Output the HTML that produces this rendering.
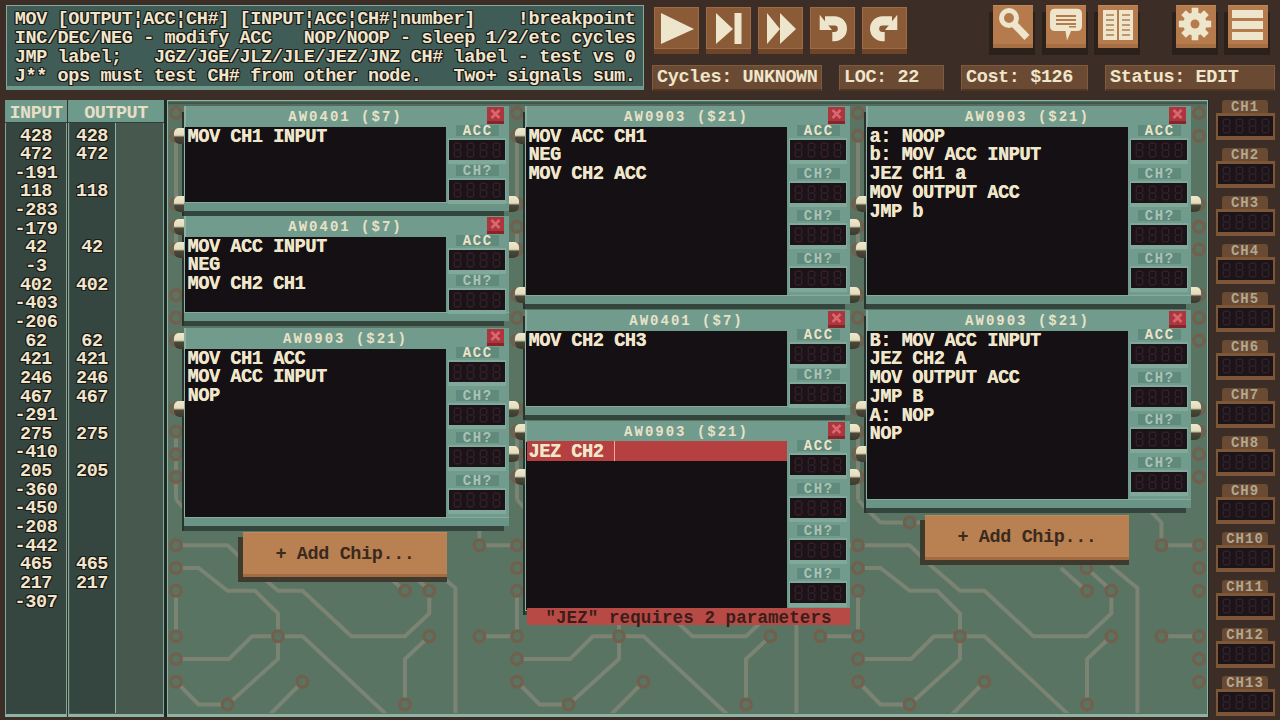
<!DOCTYPE html><html><head><meta charset="utf-8"><style>
*{margin:0;padding:0;box-sizing:border-box}
html,body{width:1280px;height:720px;overflow:hidden;background:#3c2d26}
body{position:relative;font-family:"Liberation Mono", monospace;font-weight:bold;color:#efe6cc}
.a{position:absolute}
.t{position:absolute;white-space:pre;font-size:18.5px;line-height:18.7px;letter-spacing:-0.4px;font-weight:bold}
.ol{text-shadow:1px 0 0 #1d1a17,-1px 0 0 #1d1a17,0 1px 0 #1d1a17,0 -1px 0 #1d1a17,1px 1px 0 #1d1a17,-1px -1px 0 #1d1a17,1px -1px 0 #1d1a17,-1px 1px 0 #1d1a17}
.chip{position:absolute;width:325px;background:#719c8d}
.code{position:absolute;left:1px;top:21px;width:261px;background:#151014}
.title{position:absolute;left:0;top:3px;width:321px;text-align:center;font-size:14px;line-height:17px;letter-spacing:2px;text-indent:2px;color:#e9e1c6}
.cl{position:absolute;width:17px;height:17px;background:#ab363e;border-bottom:3px solid #84262d}
.lab{position:absolute;width:43px;height:11px;background:#5f8a7c;text-align:center;font-size:14px;line-height:12.5px;letter-spacing:1.6px;text-indent:1.6px}
.disp{position:absolute;width:58px;height:26px;background:#80a99a}
.din{position:absolute;left:1.5px;top:2px;width:55.5px;height:20px;background:#1b1317;color:#2e1a1e;font-size:19px;line-height:20px;letter-spacing:0.5px;text-align:center;font-weight:normal}
.ct{font-size:18.5px;line-height:17.43px;letter-spacing:-0.4px;transform:scaleY(1.07);transform-origin:0 0;text-shadow:0.3px 0 0 #efe6cc}
.nub{position:absolute;width:10px;height:16px;background:linear-gradient(#efe8cc 0,#e4dcbc 45%,#4a4838 58%,#3a3a2e 100%)}
.btn{position:absolute;width:45px;height:47px;background:#6e4529}
.bface{position:absolute;left:0;top:0;width:45px;height:42px;background:#8b5a36;border:1.5px solid #9d6b44}
.rbtn{position:absolute;background:#3a2a22}
.sbox{position:absolute;height:26px;background:#6b4a33;border:1.5px solid #7f5b3e;border-bottom:2px solid #4e3524}
.chtab{position:absolute;left:1222px;width:46px;height:13px;background:#6a4a33;color:#b0a790;font-size:14px;border-radius:3px 3px 0 0;line-height:15px;text-align:center;letter-spacing:1px}
.chd{position:absolute;left:1216px;width:59px;height:27px;background:#7c5636}
.chd i{position:absolute;left:2px;top:2.5px;width:55px;height:20.5px;background:#1b1418;color:#2e1d24;font-style:normal;font-size:19px;line-height:21px;text-align:center}
</style></head><body>
<svg width="0" height="0" style="position:absolute"><defs><g id="dg" stroke="#35202a" stroke-width="1.5"><line x1="5.5" y1="3.3" x2="11.5" y2="3.3"/><line x1="5.3" y1="4.0" x2="5.3" y2="9.3"/><line x1="11.7" y1="4.0" x2="11.7" y2="9.3"/><line x1="5.5" y1="10.0" x2="11.5" y2="10.0"/><line x1="5.3" y1="10.7" x2="5.3" y2="16.1"/><line x1="11.7" y1="10.7" x2="11.7" y2="16.1"/><line x1="5.5" y1="16.7" x2="11.5" y2="16.7"/><line x1="18.5" y1="3.3" x2="24.5" y2="3.3"/><line x1="18.3" y1="4.0" x2="18.3" y2="9.3"/><line x1="24.7" y1="4.0" x2="24.7" y2="9.3"/><line x1="18.5" y1="10.0" x2="24.5" y2="10.0"/><line x1="18.3" y1="10.7" x2="18.3" y2="16.1"/><line x1="24.7" y1="10.7" x2="24.7" y2="16.1"/><line x1="18.5" y1="16.7" x2="24.5" y2="16.7"/><line x1="31.5" y1="3.3" x2="37.5" y2="3.3"/><line x1="31.3" y1="4.0" x2="31.3" y2="9.3"/><line x1="37.7" y1="4.0" x2="37.7" y2="9.3"/><line x1="31.5" y1="10.0" x2="37.5" y2="10.0"/><line x1="31.3" y1="10.7" x2="31.3" y2="16.1"/><line x1="37.7" y1="10.7" x2="37.7" y2="16.1"/><line x1="31.5" y1="16.7" x2="37.5" y2="16.7"/><line x1="44.5" y1="3.3" x2="50.5" y2="3.3"/><line x1="44.3" y1="4.0" x2="44.3" y2="9.3"/><line x1="50.7" y1="4.0" x2="50.7" y2="9.3"/><line x1="44.5" y1="10.0" x2="50.5" y2="10.0"/><line x1="44.3" y1="10.7" x2="44.3" y2="16.1"/><line x1="50.7" y1="10.7" x2="50.7" y2="16.1"/><line x1="44.5" y1="16.7" x2="50.5" y2="16.7"/></g></defs></svg>
<div class="a" style="left:6px;top:5px;width:638px;height:85px;background:#3f5c56;border:1.5px solid #82aa9d;border-bottom:4px solid #6f978a"></div>
<div class="t ol" style="left:14.8px;top:11.30px">MOV [OUTPUT¦ACC¦CH#] [INPUT¦ACC¦CH#¦number]    !breakpoint</div>
<div class="t ol" style="left:14.8px;top:30.05px">INC/DEC/NEG - modify ACC   NOP/NOOP - sleep 1/2/etc cycles</div>
<div class="t ol" style="left:14.8px;top:48.80px">JMP label;   JGZ/JGE/JLZ/JLE/JEZ/JNZ CH# label - test vs 0</div>
<div class="t ol" style="left:14.8px;top:67.55px">J** ops must test CH# from other node.   Two+ signals sum.</div>
<div class="btn" style="left:654px;top:6.5px"><div class="bface"></div><svg class="a" style="left:0;top:0" width="45" height="47"><polygon points="7,6 7,37 40,22" fill="#ede5cc"/></svg></div>
<div class="btn" style="left:706px;top:6.5px"><div class="bface"></div><svg class="a" style="left:0;top:0" width="45" height="47"><polygon points="10,6 10,37 27,22" fill="#ede5cc"/><rect x="28.5" y="6" width="7" height="31" fill="#ede5cc"/></svg></div>
<div class="btn" style="left:758px;top:6.5px"><div class="bface"></div><svg class="a" style="left:0;top:0" width="45" height="47"><polygon points="9,6 9,37 22,22" fill="#ede5cc"/><polygon points="22,6 22,37 38,22" fill="#ede5cc"/></svg></div>
<div class="btn" style="left:810px;top:6.5px"><div class="bface"></div><svg class="a" style="left:0;top:0" width="45" height="47"><path d="M15,13.8 H24.5 A7.9,7.9 0 0 1 24.5,29.6 H22.3" fill="none" stroke="#ede5cc" stroke-width="9.2"/><polygon points="9.7,7.8 9.7,23 22,23" fill="#ede5cc"/></svg></div>
<div class="btn" style="left:862px;top:6.5px"><div class="bface"></div><svg class="a" style="left:0;top:0" width="45" height="47"><g transform="translate(45,0) scale(-1,1)"><path d="M15,13.8 H24.5 A7.9,7.9 0 0 1 24.5,29.6 H22.3" fill="none" stroke="#ede5cc" stroke-width="9.2"/><polygon points="9.7,7.8 9.7,23 22,23" fill="#ede5cc"/></g></svg></div>
<div class="a" style="left:989px;top:12px;width:46px;height:42.5px;background:#2b201a"></div>
<div class="a" style="left:993px;top:5px;width:40px;height:43px;background:#a66f44"></div>
<div class="a" style="left:993px;top:5px;width:40px;height:39px;background:#b67b4d;border-top:1.5px solid #c08856"></div>
<svg class="a" style="left:993px;top:5px" width="40" height="40"><circle cx="16" cy="13" r="7.5" fill="none" stroke="#ede5cc" stroke-width="5"/><line x1="21" y1="19" x2="34" y2="32.5" stroke="#ede5cc" stroke-width="7"/></svg>
<div class="a" style="left:1042px;top:12px;width:46px;height:42.5px;background:#2b201a"></div>
<div class="a" style="left:1046px;top:5px;width:40px;height:43px;background:#a66f44"></div>
<div class="a" style="left:1046px;top:5px;width:40px;height:39px;background:#b67b4d;border-top:1.5px solid #c08856"></div>
<svg class="a" style="left:1046px;top:5px" width="40" height="40"><path d="M9,3.8 L31,3.8 Q36,3.8 36,9 L36,21 Q36,26 31,26 L25,26 L21,35.5 L19.5,26 L9,26 Q4,26 4,21 L4,9 Q4,3.8 9,3.8 Z" fill="#ede5cc"/><rect x="10" y="10" width="20" height="2" fill="#b67b4d"/><rect x="10" y="14" width="20" height="2" fill="#b67b4d"/><rect x="10" y="18" width="20" height="2" fill="#b67b4d"/><rect x="23" y="21" width="7" height="1.5" fill="#b67b4d"/></svg>
<div class="a" style="left:1094px;top:12px;width:46px;height:42.5px;background:#2b201a"></div>
<div class="a" style="left:1098px;top:5px;width:40px;height:43px;background:#a66f44"></div>
<div class="a" style="left:1098px;top:5px;width:40px;height:39px;background:#b67b4d;border-top:1.5px solid #c08856"></div>
<svg class="a" style="left:1098px;top:5px" width="40" height="40"><path d="M5,5 L19,5 L19,35 L5,35 Z M21,5 L35,5 L35,35 L21,35 Z" fill="#ede5cc"/><g stroke="#b67b4d" stroke-width="1.5"><line x1="8" y1="10" x2="16" y2="10"/><line x1="8" y1="15" x2="16" y2="15"/><line x1="8" y1="20" x2="16" y2="20"/><line x1="8" y1="25" x2="16" y2="25"/><line x1="8" y1="30" x2="16" y2="30"/><line x1="24" y1="10" x2="32" y2="10"/><line x1="24" y1="15" x2="32" y2="15"/><line x1="24" y1="20" x2="32" y2="20"/><line x1="24" y1="25" x2="32" y2="25"/><line x1="24" y1="30" x2="32" y2="30"/></g></svg>
<div class="a" style="left:1172px;top:12px;width:46px;height:42.5px;background:#2b201a"></div>
<div class="a" style="left:1176px;top:5px;width:40px;height:43px;background:#a66f44"></div>
<div class="a" style="left:1176px;top:5px;width:40px;height:39px;background:#b67b4d;border-top:1.5px solid #c08856"></div>
<svg class="a" style="left:1176px;top:5px" width="40" height="40"><polygon points="29.99,15.60 35.17,15.72 35.17,22.28 29.99,22.40 29.17,24.37 32.75,28.12 28.12,32.75 24.37,29.17 22.40,29.99 22.28,35.17 15.72,35.17 15.60,29.99 13.63,29.17 9.88,32.75 5.25,28.12 8.83,24.37 8.01,22.40 2.83,22.28 2.83,15.72 8.01,15.60 8.83,13.63 5.25,9.88 9.88,5.25 13.63,8.83 15.60,8.01 15.72,2.83 22.28,2.83 22.40,8.01 24.37,8.83 28.12,5.25 32.75,9.88 29.17,13.63" fill="#ede5cc"/><circle cx="19" cy="19" r="11.5" fill="#ede5cc"/><circle cx="19" cy="19" r="4.5" fill="#b67b4d"/></svg>
<div class="a" style="left:1224px;top:12px;width:46px;height:42.5px;background:#2b201a"></div>
<div class="a" style="left:1228px;top:5px;width:40px;height:43px;background:#a66f44"></div>
<div class="a" style="left:1228px;top:5px;width:40px;height:39px;background:#b67b4d;border-top:1.5px solid #c08856"></div>
<svg class="a" style="left:1228px;top:5px" width="40" height="40"><rect x="4" y="5" width="31" height="8" fill="#ede5cc"/><rect x="4" y="16" width="31" height="8" fill="#ede5cc"/><rect x="4" y="27" width="31" height="8" fill="#ede5cc"/></svg>
<div class="sbox" style="left:652px;top:64.5px;width:170px"></div>
<div class="t" style="left:657px;top:69px">Cycles: UNKNOWN</div>
<div class="sbox" style="left:839px;top:64.5px;width:105px"></div>
<div class="t" style="left:844px;top:69px">LOC: 22</div>
<div class="sbox" style="left:961px;top:64.5px;width:127px"></div>
<div class="t" style="left:966px;top:69px">Cost: $126</div>
<div class="sbox" style="left:1105px;top:64.5px;width:170px"></div>
<div class="t" style="left:1110px;top:69px">Status: EDIT</div>
<div class="a" style="left:5px;top:100px;width:62px;height:617px;background:#34463f;border:1.5px solid #7fa79a;border-bottom:3.5px solid #8fb3a5"></div>
<div class="a" style="left:68px;top:100px;width:96px;height:617px;background:#47594f;border:1.5px solid #7fa79a;border-bottom:3.5px solid #8fb3a5"></div>
<div class="a" style="left:69.5px;top:123px;width:46px;height:590px;background:#34463f;border-right:1.5px solid #8fb3a5"></div>
<div class="a" style="left:5px;top:100px;width:62px;height:23px;background:#6e9a8c;border-bottom:1px solid #2c3f3b"></div>
<div class="a" style="left:68px;top:100px;width:96px;height:23px;background:#6e9a8c;border-bottom:1px solid #2c3f3b"></div>
<div class="t" style="left:5px;top:105px;width:62px;text-align:center;color:#e7dec3;letter-spacing:-0.5px">INPUT</div>
<div class="t" style="left:68px;top:105px;width:96px;text-align:center;color:#e7dec3;letter-spacing:-0.5px">OUTPUT</div>
<div class="t ol" style="left:6px;top:127.5px;width:60px;text-align:center">428</div>
<div class="t ol" style="left:69px;top:127.5px;width:46px;text-align:center">428</div>
<div class="t ol" style="left:6px;top:146.1px;width:60px;text-align:center">472</div>
<div class="t ol" style="left:69px;top:146.1px;width:46px;text-align:center">472</div>
<div class="t ol" style="left:6px;top:164.8px;width:60px;text-align:center">-191</div>
<div class="t ol" style="left:6px;top:183.4px;width:60px;text-align:center">118</div>
<div class="t ol" style="left:69px;top:183.4px;width:46px;text-align:center">118</div>
<div class="t ol" style="left:6px;top:202.1px;width:60px;text-align:center">-283</div>
<div class="t ol" style="left:6px;top:220.7px;width:60px;text-align:center">-179</div>
<div class="t ol" style="left:6px;top:239.3px;width:60px;text-align:center">42</div>
<div class="t ol" style="left:69px;top:239.3px;width:46px;text-align:center">42</div>
<div class="t ol" style="left:6px;top:258.0px;width:60px;text-align:center">-3</div>
<div class="t ol" style="left:6px;top:276.6px;width:60px;text-align:center">402</div>
<div class="t ol" style="left:69px;top:276.6px;width:46px;text-align:center">402</div>
<div class="t ol" style="left:6px;top:295.3px;width:60px;text-align:center">-403</div>
<div class="t ol" style="left:6px;top:313.9px;width:60px;text-align:center">-206</div>
<div class="t ol" style="left:6px;top:332.5px;width:60px;text-align:center">62</div>
<div class="t ol" style="left:69px;top:332.5px;width:46px;text-align:center">62</div>
<div class="t ol" style="left:6px;top:351.2px;width:60px;text-align:center">421</div>
<div class="t ol" style="left:69px;top:351.2px;width:46px;text-align:center">421</div>
<div class="t ol" style="left:6px;top:369.8px;width:60px;text-align:center">246</div>
<div class="t ol" style="left:69px;top:369.8px;width:46px;text-align:center">246</div>
<div class="t ol" style="left:6px;top:388.5px;width:60px;text-align:center">467</div>
<div class="t ol" style="left:69px;top:388.5px;width:46px;text-align:center">467</div>
<div class="t ol" style="left:6px;top:407.1px;width:60px;text-align:center">-291</div>
<div class="t ol" style="left:6px;top:425.7px;width:60px;text-align:center">275</div>
<div class="t ol" style="left:69px;top:425.7px;width:46px;text-align:center">275</div>
<div class="t ol" style="left:6px;top:444.4px;width:60px;text-align:center">-410</div>
<div class="t ol" style="left:6px;top:463.0px;width:60px;text-align:center">205</div>
<div class="t ol" style="left:69px;top:463.0px;width:46px;text-align:center">205</div>
<div class="t ol" style="left:6px;top:481.7px;width:60px;text-align:center">-360</div>
<div class="t ol" style="left:6px;top:500.3px;width:60px;text-align:center">-450</div>
<div class="t ol" style="left:6px;top:518.9px;width:60px;text-align:center">-208</div>
<div class="t ol" style="left:6px;top:537.6px;width:60px;text-align:center">-442</div>
<div class="t ol" style="left:6px;top:556.2px;width:60px;text-align:center">465</div>
<div class="t ol" style="left:69px;top:556.2px;width:46px;text-align:center">465</div>
<div class="t ol" style="left:6px;top:574.9px;width:60px;text-align:center">217</div>
<div class="t ol" style="left:69px;top:574.9px;width:46px;text-align:center">217</div>
<div class="t ol" style="left:6px;top:593.5px;width:60px;text-align:center">-307</div>
<div class="a" style="left:164px;top:100px;width:1045px;height:617px;background:#1f2a25"></div>
<div class="a" style="left:166.5px;top:100px;width:1041.5px;height:617px;background:#5a7463;border:1.5px solid #8db3a4;border-bottom:3.5px solid #8db3a4"></div>
<div class="a" style="left:168px;top:101.5px;width:1039px;height:2px;background:#3f5a4c"></div><div class="a" style="left:168px;top:103.5px;width:1039px;height:2.5px;background:#566a5e"></div>
<svg class="a" style="left:168px;top:101px" width="1039" height="612" viewBox="168 101 1039 612"><polyline points="176.0,545.25 227.6,545.25 249.0,565.70 278.0,590.75 302.5,590.75 351.4,636.25 405.0,636.25 429.3,613.50 429.3,590.75" fill="none" stroke="#7b8373" stroke-width="4" stroke-linejoin="round"/><polyline points="176.0,568.00 198.6,568.00 227.6,590.75 255.0,590.75 278.0,613.50 278.0,636.25" fill="none" stroke="#7b8373" stroke-width="4" stroke-linejoin="round"/><polyline points="176.0,590.75 176.0,636.25" fill="none" stroke="#7b8373" stroke-width="4" stroke-linejoin="round"/><polyline points="176.0,659.00 229.0,659.00 252.0,636.25 278.0,636.25" fill="none" stroke="#7b8373" stroke-width="4" stroke-linejoin="round"/><polyline points="278.0,636.25 302.5,636.25 388.0,716.00" fill="none" stroke="#7b8373" stroke-width="4" stroke-linejoin="round"/><polyline points="278.0,636.25 278.0,659.00 227.6,704.50" fill="none" stroke="#7b8373" stroke-width="4" stroke-linejoin="round"/><polyline points="176.0,681.75 198.6,704.50 227.6,704.50" fill="none" stroke="#7b8373" stroke-width="4" stroke-linejoin="round"/><polyline points="302.5,681.75 268.5,716.00" fill="none" stroke="#7b8373" stroke-width="4" stroke-linejoin="round"/><polyline points="429.3,636.25 405.0,659.00 405.0,704.50" fill="none" stroke="#7b8373" stroke-width="4" stroke-linejoin="round"/><polyline points="378.8,568.00 404.3,590.75" fill="none" stroke="#7b8373" stroke-width="4" stroke-linejoin="round"/><polyline points="404.3,568.00 429.9,590.75" fill="none" stroke="#7b8373" stroke-width="4" stroke-linejoin="round"/><polyline points="428.3,565.70 455.4,588.00 455.4,716.00" fill="none" stroke="#7b8373" stroke-width="4" stroke-linejoin="round"/><polyline points="479.4,545.25 479.4,522.50 460.0,502.00" fill="none" stroke="#7b8373" stroke-width="4" stroke-linejoin="round"/><polyline points="479.4,545.25 517.0,545.25" fill="none" stroke="#7b8373" stroke-width="4" stroke-linejoin="round"/><polyline points="479.4,636.25 517.0,636.25" fill="none" stroke="#7b8373" stroke-width="4" stroke-linejoin="round"/><polyline points="176.0,474.00 176.0,499.75" fill="none" stroke="#7b8373" stroke-width="4" stroke-linejoin="round"/><polyline points="176.0,499.75 186.0,510.50 198.6,522.50 245.0,522.50" fill="none" stroke="#7b8373" stroke-width="4" stroke-linejoin="round"/><polyline points="176.0,135.75 176.0,204.00" fill="none" stroke="#7b8373" stroke-width="4" stroke-linejoin="round"/><polyline points="176.0,226.75 176.0,247.00" fill="none" stroke="#7b8373" stroke-width="4" stroke-linejoin="round"/><polyline points="176.0,431.50 176.0,474.00" fill="none" stroke="#7b8373" stroke-width="4" stroke-linejoin="round"/><polyline points="517.0,545.25 568.6,545.25 590.0,565.70 619.0,590.75 643.5,590.75 692.4,636.25 746.0,636.25 770.3,613.50 770.3,590.75" fill="none" stroke="#7b8373" stroke-width="4" stroke-linejoin="round"/><polyline points="517.0,568.00 539.6,568.00 568.6,590.75 596.0,590.75 619.0,613.50 619.0,636.25" fill="none" stroke="#7b8373" stroke-width="4" stroke-linejoin="round"/><polyline points="517.0,590.75 517.0,636.25" fill="none" stroke="#7b8373" stroke-width="4" stroke-linejoin="round"/><polyline points="517.0,659.00 570.0,659.00 593.0,636.25 619.0,636.25" fill="none" stroke="#7b8373" stroke-width="4" stroke-linejoin="round"/><polyline points="619.0,636.25 643.5,636.25 729.0,716.00" fill="none" stroke="#7b8373" stroke-width="4" stroke-linejoin="round"/><polyline points="619.0,636.25 619.0,659.00 568.6,704.50" fill="none" stroke="#7b8373" stroke-width="4" stroke-linejoin="round"/><polyline points="517.0,681.75 539.6,704.50 568.6,704.50" fill="none" stroke="#7b8373" stroke-width="4" stroke-linejoin="round"/><polyline points="643.5,681.75 609.5,716.00" fill="none" stroke="#7b8373" stroke-width="4" stroke-linejoin="round"/><polyline points="770.3,636.25 746.0,659.00 746.0,704.50" fill="none" stroke="#7b8373" stroke-width="4" stroke-linejoin="round"/><polyline points="719.8,568.00 745.3,590.75" fill="none" stroke="#7b8373" stroke-width="4" stroke-linejoin="round"/><polyline points="745.3,568.00 770.9,590.75" fill="none" stroke="#7b8373" stroke-width="4" stroke-linejoin="round"/><polyline points="769.3,565.70 796.4,588.00 796.4,716.00" fill="none" stroke="#7b8373" stroke-width="4" stroke-linejoin="round"/><polyline points="820.4,545.25 820.4,522.50 801.0,502.00" fill="none" stroke="#7b8373" stroke-width="4" stroke-linejoin="round"/><polyline points="820.4,545.25 858.0,545.25" fill="none" stroke="#7b8373" stroke-width="4" stroke-linejoin="round"/><polyline points="820.4,636.25 858.0,636.25" fill="none" stroke="#7b8373" stroke-width="4" stroke-linejoin="round"/><polyline points="517.0,474.00 517.0,499.75" fill="none" stroke="#7b8373" stroke-width="4" stroke-linejoin="round"/><polyline points="517.0,499.75 527.0,510.50 539.6,522.50 586.0,522.50" fill="none" stroke="#7b8373" stroke-width="4" stroke-linejoin="round"/><polyline points="517.0,135.75 517.0,204.00" fill="none" stroke="#7b8373" stroke-width="4" stroke-linejoin="round"/><polyline points="517.0,226.75 517.0,247.00" fill="none" stroke="#7b8373" stroke-width="4" stroke-linejoin="round"/><polyline points="517.0,431.50 517.0,474.00" fill="none" stroke="#7b8373" stroke-width="4" stroke-linejoin="round"/><polyline points="858.0,545.25 909.6,545.25 931.0,565.70 960.0,590.75 984.5,590.75 1033.4,636.25 1087.0,636.25 1111.3,613.50 1111.3,590.75" fill="none" stroke="#7b8373" stroke-width="4" stroke-linejoin="round"/><polyline points="858.0,568.00 880.6,568.00 909.6,590.75 937.0,590.75 960.0,613.50 960.0,636.25" fill="none" stroke="#7b8373" stroke-width="4" stroke-linejoin="round"/><polyline points="858.0,590.75 858.0,636.25" fill="none" stroke="#7b8373" stroke-width="4" stroke-linejoin="round"/><polyline points="858.0,659.00 911.0,659.00 934.0,636.25 960.0,636.25" fill="none" stroke="#7b8373" stroke-width="4" stroke-linejoin="round"/><polyline points="960.0,636.25 984.5,636.25 1070.0,716.00" fill="none" stroke="#7b8373" stroke-width="4" stroke-linejoin="round"/><polyline points="960.0,636.25 960.0,659.00 909.6,704.50" fill="none" stroke="#7b8373" stroke-width="4" stroke-linejoin="round"/><polyline points="858.0,681.75 880.6,704.50 909.6,704.50" fill="none" stroke="#7b8373" stroke-width="4" stroke-linejoin="round"/><polyline points="984.5,681.75 950.5,716.00" fill="none" stroke="#7b8373" stroke-width="4" stroke-linejoin="round"/><polyline points="1111.3,636.25 1087.0,659.00 1087.0,704.50" fill="none" stroke="#7b8373" stroke-width="4" stroke-linejoin="round"/><polyline points="1060.8,568.00 1086.3,590.75" fill="none" stroke="#7b8373" stroke-width="4" stroke-linejoin="round"/><polyline points="1086.3,568.00 1111.9,590.75" fill="none" stroke="#7b8373" stroke-width="4" stroke-linejoin="round"/><polyline points="1110.3,565.70 1137.4,588.00 1137.4,716.00" fill="none" stroke="#7b8373" stroke-width="4" stroke-linejoin="round"/><polyline points="1161.4,545.25 1161.4,522.50 1142.0,502.00" fill="none" stroke="#7b8373" stroke-width="4" stroke-linejoin="round"/><polyline points="1161.4,545.25 1199.0,545.25" fill="none" stroke="#7b8373" stroke-width="4" stroke-linejoin="round"/><polyline points="1161.4,636.25 1199.0,636.25" fill="none" stroke="#7b8373" stroke-width="4" stroke-linejoin="round"/><polyline points="858.0,474.00 858.0,499.75" fill="none" stroke="#7b8373" stroke-width="4" stroke-linejoin="round"/><polyline points="858.0,499.75 868.0,510.50 880.6,522.50 927.0,522.50" fill="none" stroke="#7b8373" stroke-width="4" stroke-linejoin="round"/><polyline points="858.0,135.75 858.0,204.00" fill="none" stroke="#7b8373" stroke-width="4" stroke-linejoin="round"/><polyline points="858.0,226.75 858.0,247.00" fill="none" stroke="#7b8373" stroke-width="4" stroke-linejoin="round"/><polyline points="858.0,431.50 858.0,474.00" fill="none" stroke="#7b8373" stroke-width="4" stroke-linejoin="round"/><circle cx="176" cy="113.00" r="5.3" fill="#5a7463" stroke="#725f4c" stroke-width="3.2"/><circle cx="176" cy="135.75" r="5.3" fill="#5a7463" stroke="#725f4c" stroke-width="3.2"/><circle cx="176" cy="204.00" r="5.3" fill="#5a7463" stroke="#725f4c" stroke-width="3.2"/><circle cx="176" cy="226.75" r="5.3" fill="#5a7463" stroke="#725f4c" stroke-width="3.2"/><circle cx="176" cy="249.50" r="5.3" fill="#5a7463" stroke="#725f4c" stroke-width="3.2"/><circle cx="176" cy="295.00" r="5.3" fill="#5a7463" stroke="#725f4c" stroke-width="3.2"/><circle cx="176" cy="317.75" r="5.3" fill="#5a7463" stroke="#725f4c" stroke-width="3.2"/><circle cx="176" cy="340.50" r="5.3" fill="#5a7463" stroke="#725f4c" stroke-width="3.2"/><circle cx="176" cy="408.75" r="5.3" fill="#5a7463" stroke="#725f4c" stroke-width="3.2"/><circle cx="176" cy="431.50" r="5.3" fill="#5a7463" stroke="#725f4c" stroke-width="3.2"/><circle cx="176" cy="454.25" r="5.3" fill="#5a7463" stroke="#725f4c" stroke-width="3.2"/><circle cx="176" cy="477.00" r="5.3" fill="#5a7463" stroke="#725f4c" stroke-width="3.2"/><circle cx="176" cy="545.25" r="5.3" fill="#5a7463" stroke="#725f4c" stroke-width="3.2"/><circle cx="176" cy="568.00" r="5.3" fill="#5a7463" stroke="#725f4c" stroke-width="3.2"/><circle cx="176" cy="590.75" r="5.3" fill="#5a7463" stroke="#725f4c" stroke-width="3.2"/><circle cx="176" cy="636.25" r="5.3" fill="#5a7463" stroke="#725f4c" stroke-width="3.2"/><circle cx="176" cy="659.00" r="5.3" fill="#5a7463" stroke="#725f4c" stroke-width="3.2"/><circle cx="176" cy="681.75" r="5.3" fill="#5a7463" stroke="#725f4c" stroke-width="3.2"/><circle cx="517" cy="113.00" r="5.3" fill="#5a7463" stroke="#725f4c" stroke-width="3.2"/><circle cx="517" cy="135.75" r="5.3" fill="#5a7463" stroke="#725f4c" stroke-width="3.2"/><circle cx="517" cy="204.00" r="5.3" fill="#5a7463" stroke="#725f4c" stroke-width="3.2"/><circle cx="517" cy="226.75" r="5.3" fill="#5a7463" stroke="#725f4c" stroke-width="3.2"/><circle cx="517" cy="249.50" r="5.3" fill="#5a7463" stroke="#725f4c" stroke-width="3.2"/><circle cx="517" cy="295.00" r="5.3" fill="#5a7463" stroke="#725f4c" stroke-width="3.2"/><circle cx="517" cy="317.75" r="5.3" fill="#5a7463" stroke="#725f4c" stroke-width="3.2"/><circle cx="517" cy="340.50" r="5.3" fill="#5a7463" stroke="#725f4c" stroke-width="3.2"/><circle cx="517" cy="408.75" r="5.3" fill="#5a7463" stroke="#725f4c" stroke-width="3.2"/><circle cx="517" cy="431.50" r="5.3" fill="#5a7463" stroke="#725f4c" stroke-width="3.2"/><circle cx="517" cy="454.25" r="5.3" fill="#5a7463" stroke="#725f4c" stroke-width="3.2"/><circle cx="517" cy="477.00" r="5.3" fill="#5a7463" stroke="#725f4c" stroke-width="3.2"/><circle cx="517" cy="545.25" r="5.3" fill="#5a7463" stroke="#725f4c" stroke-width="3.2"/><circle cx="517" cy="568.00" r="5.3" fill="#5a7463" stroke="#725f4c" stroke-width="3.2"/><circle cx="517" cy="590.75" r="5.3" fill="#5a7463" stroke="#725f4c" stroke-width="3.2"/><circle cx="517" cy="636.25" r="5.3" fill="#5a7463" stroke="#725f4c" stroke-width="3.2"/><circle cx="517" cy="659.00" r="5.3" fill="#5a7463" stroke="#725f4c" stroke-width="3.2"/><circle cx="517" cy="681.75" r="5.3" fill="#5a7463" stroke="#725f4c" stroke-width="3.2"/><circle cx="858" cy="113.00" r="5.3" fill="#5a7463" stroke="#725f4c" stroke-width="3.2"/><circle cx="858" cy="135.75" r="5.3" fill="#5a7463" stroke="#725f4c" stroke-width="3.2"/><circle cx="858" cy="204.00" r="5.3" fill="#5a7463" stroke="#725f4c" stroke-width="3.2"/><circle cx="858" cy="226.75" r="5.3" fill="#5a7463" stroke="#725f4c" stroke-width="3.2"/><circle cx="858" cy="249.50" r="5.3" fill="#5a7463" stroke="#725f4c" stroke-width="3.2"/><circle cx="858" cy="295.00" r="5.3" fill="#5a7463" stroke="#725f4c" stroke-width="3.2"/><circle cx="858" cy="317.75" r="5.3" fill="#5a7463" stroke="#725f4c" stroke-width="3.2"/><circle cx="858" cy="340.50" r="5.3" fill="#5a7463" stroke="#725f4c" stroke-width="3.2"/><circle cx="858" cy="408.75" r="5.3" fill="#5a7463" stroke="#725f4c" stroke-width="3.2"/><circle cx="858" cy="431.50" r="5.3" fill="#5a7463" stroke="#725f4c" stroke-width="3.2"/><circle cx="858" cy="454.25" r="5.3" fill="#5a7463" stroke="#725f4c" stroke-width="3.2"/><circle cx="858" cy="477.00" r="5.3" fill="#5a7463" stroke="#725f4c" stroke-width="3.2"/><circle cx="858" cy="545.25" r="5.3" fill="#5a7463" stroke="#725f4c" stroke-width="3.2"/><circle cx="858" cy="568.00" r="5.3" fill="#5a7463" stroke="#725f4c" stroke-width="3.2"/><circle cx="858" cy="590.75" r="5.3" fill="#5a7463" stroke="#725f4c" stroke-width="3.2"/><circle cx="858" cy="636.25" r="5.3" fill="#5a7463" stroke="#725f4c" stroke-width="3.2"/><circle cx="858" cy="659.00" r="5.3" fill="#5a7463" stroke="#725f4c" stroke-width="3.2"/><circle cx="858" cy="681.75" r="5.3" fill="#5a7463" stroke="#725f4c" stroke-width="3.2"/><circle cx="1199" cy="113.00" r="5.3" fill="#5a7463" stroke="#725f4c" stroke-width="3.2"/><circle cx="1199" cy="135.75" r="5.3" fill="#5a7463" stroke="#725f4c" stroke-width="3.2"/><circle cx="1199" cy="204.00" r="5.3" fill="#5a7463" stroke="#725f4c" stroke-width="3.2"/><circle cx="1199" cy="226.75" r="5.3" fill="#5a7463" stroke="#725f4c" stroke-width="3.2"/><circle cx="1199" cy="249.50" r="5.3" fill="#5a7463" stroke="#725f4c" stroke-width="3.2"/><circle cx="1199" cy="295.00" r="5.3" fill="#5a7463" stroke="#725f4c" stroke-width="3.2"/><circle cx="1199" cy="317.75" r="5.3" fill="#5a7463" stroke="#725f4c" stroke-width="3.2"/><circle cx="1199" cy="340.50" r="5.3" fill="#5a7463" stroke="#725f4c" stroke-width="3.2"/><circle cx="1199" cy="408.75" r="5.3" fill="#5a7463" stroke="#725f4c" stroke-width="3.2"/><circle cx="1199" cy="431.50" r="5.3" fill="#5a7463" stroke="#725f4c" stroke-width="3.2"/><circle cx="1199" cy="454.25" r="5.3" fill="#5a7463" stroke="#725f4c" stroke-width="3.2"/><circle cx="1199" cy="477.00" r="5.3" fill="#5a7463" stroke="#725f4c" stroke-width="3.2"/><circle cx="1199" cy="545.25" r="5.3" fill="#5a7463" stroke="#725f4c" stroke-width="3.2"/><circle cx="1199" cy="568.00" r="5.3" fill="#5a7463" stroke="#725f4c" stroke-width="3.2"/><circle cx="1199" cy="590.75" r="5.3" fill="#5a7463" stroke="#725f4c" stroke-width="3.2"/><circle cx="1199" cy="636.25" r="5.3" fill="#5a7463" stroke="#725f4c" stroke-width="3.2"/><circle cx="1199" cy="659.00" r="5.3" fill="#5a7463" stroke="#725f4c" stroke-width="3.2"/><circle cx="1199" cy="681.75" r="5.3" fill="#5a7463" stroke="#725f4c" stroke-width="3.2"/><circle cx="227.6" cy="522.50" r="5.3" fill="#5a7463" stroke="#725f4c" stroke-width="3.2"/><circle cx="227.6" cy="704.50" r="5.3" fill="#5a7463" stroke="#725f4c" stroke-width="3.2"/><circle cx="278.0" cy="636.25" r="5.3" fill="#5a7463" stroke="#725f4c" stroke-width="3.2"/><circle cx="302.5" cy="681.75" r="5.3" fill="#5a7463" stroke="#725f4c" stroke-width="3.2"/><circle cx="404.3" cy="568.00" r="5.3" fill="#5a7463" stroke="#725f4c" stroke-width="3.2"/><circle cx="405.0" cy="590.75" r="5.3" fill="#5a7463" stroke="#725f4c" stroke-width="3.2"/><circle cx="429.3" cy="590.75" r="5.3" fill="#5a7463" stroke="#725f4c" stroke-width="3.2"/><circle cx="429.3" cy="636.25" r="5.3" fill="#5a7463" stroke="#725f4c" stroke-width="3.2"/><circle cx="405.0" cy="704.50" r="5.3" fill="#5a7463" stroke="#725f4c" stroke-width="3.2"/><circle cx="479.4" cy="545.25" r="5.3" fill="#5a7463" stroke="#725f4c" stroke-width="3.2"/><circle cx="479.4" cy="636.25" r="5.3" fill="#5a7463" stroke="#725f4c" stroke-width="3.2"/><circle cx="568.6" cy="522.50" r="5.3" fill="#5a7463" stroke="#725f4c" stroke-width="3.2"/><circle cx="568.6" cy="704.50" r="5.3" fill="#5a7463" stroke="#725f4c" stroke-width="3.2"/><circle cx="619.0" cy="636.25" r="5.3" fill="#5a7463" stroke="#725f4c" stroke-width="3.2"/><circle cx="643.5" cy="681.75" r="5.3" fill="#5a7463" stroke="#725f4c" stroke-width="3.2"/><circle cx="745.3" cy="568.00" r="5.3" fill="#5a7463" stroke="#725f4c" stroke-width="3.2"/><circle cx="746.0" cy="590.75" r="5.3" fill="#5a7463" stroke="#725f4c" stroke-width="3.2"/><circle cx="770.3" cy="590.75" r="5.3" fill="#5a7463" stroke="#725f4c" stroke-width="3.2"/><circle cx="770.3" cy="636.25" r="5.3" fill="#5a7463" stroke="#725f4c" stroke-width="3.2"/><circle cx="746.0" cy="704.50" r="5.3" fill="#5a7463" stroke="#725f4c" stroke-width="3.2"/><circle cx="820.4" cy="545.25" r="5.3" fill="#5a7463" stroke="#725f4c" stroke-width="3.2"/><circle cx="820.4" cy="636.25" r="5.3" fill="#5a7463" stroke="#725f4c" stroke-width="3.2"/><circle cx="909.6" cy="522.50" r="5.3" fill="#5a7463" stroke="#725f4c" stroke-width="3.2"/><circle cx="909.6" cy="704.50" r="5.3" fill="#5a7463" stroke="#725f4c" stroke-width="3.2"/><circle cx="960.0" cy="636.25" r="5.3" fill="#5a7463" stroke="#725f4c" stroke-width="3.2"/><circle cx="984.5" cy="681.75" r="5.3" fill="#5a7463" stroke="#725f4c" stroke-width="3.2"/><circle cx="1086.3" cy="568.00" r="5.3" fill="#5a7463" stroke="#725f4c" stroke-width="3.2"/><circle cx="1087.0" cy="590.75" r="5.3" fill="#5a7463" stroke="#725f4c" stroke-width="3.2"/><circle cx="1111.3" cy="590.75" r="5.3" fill="#5a7463" stroke="#725f4c" stroke-width="3.2"/><circle cx="1111.3" cy="636.25" r="5.3" fill="#5a7463" stroke="#725f4c" stroke-width="3.2"/><circle cx="1087.0" cy="704.50" r="5.3" fill="#5a7463" stroke="#725f4c" stroke-width="3.2"/><circle cx="1161.4" cy="545.25" r="5.3" fill="#5a7463" stroke="#725f4c" stroke-width="3.2"/><circle cx="1161.4" cy="636.25" r="5.3" fill="#5a7463" stroke="#725f4c" stroke-width="3.2"/></svg>
<div class="a" style="left:181.5px;top:211px;width:322px;height:4.5px;background:#34453d"></div>
<div class="a" style="left:181.5px;top:112px;width:2.5px;height:103.5px;background:#27332d"></div>
<div class="chip" style="left:184px;top:106px;height:105px">
<div class="a" style="left:0;top:0;width:1.5px;height:105px;background:#8cb1a3"></div>
<div class="a" style="left:0;top:96px;width:325px;height:9px;background:#6a9485;border-top:1px solid #86ab9d"></div>
<div class="title">AW0401 ($7)</div>
<div class="cl" style="left:303px;top:1px"><svg width="17" height="14" style="position:absolute;left:0;top:0"><path d="M4.5,3 L12.5,11 M12.5,3 L4.5,11" stroke="#dc6670" stroke-width="2.6"/></svg></div>
<div class="code" style="height:75px"></div>
<div class="t ct" style="left:3.5px;top:21.8px">MOV CH1 INPUT</div>
<div class="lab" style="left:271.5px;top:19.0px;color:#ece3c8">ACC</div>
<div class="disp" style="left:263.75px;top:32.0px"><div class="din"><svg width="55.5" height="20" style="position:absolute;left:0;top:0"><use href="#dg"/></svg></div></div>
<div class="lab" style="left:271.5px;top:59.0px;color:#a9c2b6">CH?</div>
<div class="disp" style="left:263.75px;top:72.0px"><div class="din"><svg width="55.5" height="20" style="position:absolute;left:0;top:0"><use href="#dg"/></svg></div></div>
</div>
<div class="a" style="left:181.5px;top:321px;width:322px;height:4.5px;background:#34453d"></div>
<div class="a" style="left:181.5px;top:222px;width:2.5px;height:103.5px;background:#27332d"></div>
<div class="chip" style="left:184px;top:216px;height:105px">
<div class="a" style="left:0;top:0;width:1.5px;height:105px;background:#8cb1a3"></div>
<div class="a" style="left:0;top:96px;width:325px;height:9px;background:#6a9485;border-top:1px solid #86ab9d"></div>
<div class="title">AW0401 ($7)</div>
<div class="cl" style="left:303px;top:1px"><svg width="17" height="14" style="position:absolute;left:0;top:0"><path d="M4.5,3 L12.5,11 M12.5,3 L4.5,11" stroke="#dc6670" stroke-width="2.6"/></svg></div>
<div class="code" style="height:75px"></div>
<div class="t ct" style="left:3.5px;top:21.8px">MOV ACC INPUT
NEG
MOV CH2 CH1</div>
<div class="lab" style="left:271.5px;top:19.0px;color:#ece3c8">ACC</div>
<div class="disp" style="left:263.75px;top:32.0px"><div class="din"><svg width="55.5" height="20" style="position:absolute;left:0;top:0"><use href="#dg"/></svg></div></div>
<div class="lab" style="left:271.5px;top:59.0px;color:#a9c2b6">CH?</div>
<div class="disp" style="left:263.75px;top:72.0px"><div class="din"><svg width="55.5" height="20" style="position:absolute;left:0;top:0"><use href="#dg"/></svg></div></div>
</div>
<div class="a" style="left:181.5px;top:526px;width:322px;height:4.5px;background:#34453d"></div>
<div class="a" style="left:181.5px;top:334px;width:2.5px;height:196.5px;background:#27332d"></div>
<div class="chip" style="left:184px;top:328px;height:198px">
<div class="a" style="left:0;top:0;width:1.5px;height:198px;background:#8cb1a3"></div>
<div class="a" style="left:0;top:189px;width:325px;height:9px;background:#6a9485;border-top:1px solid #86ab9d"></div>
<div class="title">AW0903 ($21)</div>
<div class="cl" style="left:303px;top:1px"><svg width="17" height="14" style="position:absolute;left:0;top:0"><path d="M4.5,3 L12.5,11 M12.5,3 L4.5,11" stroke="#dc6670" stroke-width="2.6"/></svg></div>
<div class="code" style="height:168px"></div>
<div class="t ct" style="left:3.5px;top:21.8px">MOV CH1 ACC
MOV ACC INPUT
NOP</div>
<div class="lab" style="left:271.5px;top:19.0px;color:#ece3c8">ACC</div>
<div class="disp" style="left:263.75px;top:32.0px"><div class="din"><svg width="55.5" height="20" style="position:absolute;left:0;top:0"><use href="#dg"/></svg></div></div>
<div class="lab" style="left:271.5px;top:61.5px;color:#a9c2b6">CH?</div>
<div class="disp" style="left:263.75px;top:74.5px"><div class="din"><svg width="55.5" height="20" style="position:absolute;left:0;top:0"><use href="#dg"/></svg></div></div>
<div class="lab" style="left:271.5px;top:104.0px;color:#a9c2b6">CH?</div>
<div class="disp" style="left:263.75px;top:117.0px"><div class="din"><svg width="55.5" height="20" style="position:absolute;left:0;top:0"><use href="#dg"/></svg></div></div>
<div class="lab" style="left:271.5px;top:146.5px;color:#a9c2b6">CH?</div>
<div class="disp" style="left:263.75px;top:159.5px"><div class="din"><svg width="55.5" height="20" style="position:absolute;left:0;top:0"><use href="#dg"/></svg></div></div>
</div>
<div class="a" style="left:522.5px;top:304px;width:322px;height:4.5px;background:#34453d"></div>
<div class="a" style="left:522.5px;top:112px;width:2.5px;height:196.5px;background:#27332d"></div>
<div class="chip" style="left:525px;top:106px;height:198px">
<div class="a" style="left:0;top:0;width:1.5px;height:198px;background:#8cb1a3"></div>
<div class="a" style="left:0;top:189px;width:325px;height:9px;background:#6a9485;border-top:1px solid #86ab9d"></div>
<div class="title">AW0903 ($21)</div>
<div class="cl" style="left:303px;top:1px"><svg width="17" height="14" style="position:absolute;left:0;top:0"><path d="M4.5,3 L12.5,11 M12.5,3 L4.5,11" stroke="#dc6670" stroke-width="2.6"/></svg></div>
<div class="code" style="height:168px"></div>
<div class="t ct" style="left:3.5px;top:21.8px">MOV ACC CH1
NEG
MOV CH2 ACC</div>
<div class="lab" style="left:271.5px;top:19.0px;color:#ece3c8">ACC</div>
<div class="disp" style="left:263.75px;top:32.0px"><div class="din"><svg width="55.5" height="20" style="position:absolute;left:0;top:0"><use href="#dg"/></svg></div></div>
<div class="lab" style="left:271.5px;top:61.5px;color:#a9c2b6">CH?</div>
<div class="disp" style="left:263.75px;top:74.5px"><div class="din"><svg width="55.5" height="20" style="position:absolute;left:0;top:0"><use href="#dg"/></svg></div></div>
<div class="lab" style="left:271.5px;top:104.0px;color:#a9c2b6">CH?</div>
<div class="disp" style="left:263.75px;top:117.0px"><div class="din"><svg width="55.5" height="20" style="position:absolute;left:0;top:0"><use href="#dg"/></svg></div></div>
<div class="lab" style="left:271.5px;top:146.5px;color:#a9c2b6">CH?</div>
<div class="disp" style="left:263.75px;top:159.5px"><div class="din"><svg width="55.5" height="20" style="position:absolute;left:0;top:0"><use href="#dg"/></svg></div></div>
</div>
<div class="a" style="left:522.5px;top:415px;width:322px;height:4.5px;background:#34453d"></div>
<div class="a" style="left:522.5px;top:316px;width:2.5px;height:103.5px;background:#27332d"></div>
<div class="chip" style="left:525px;top:310px;height:105px">
<div class="a" style="left:0;top:0;width:1.5px;height:105px;background:#8cb1a3"></div>
<div class="a" style="left:0;top:96px;width:325px;height:9px;background:#6a9485;border-top:1px solid #86ab9d"></div>
<div class="title">AW0401 ($7)</div>
<div class="cl" style="left:303px;top:1px"><svg width="17" height="14" style="position:absolute;left:0;top:0"><path d="M4.5,3 L12.5,11 M12.5,3 L4.5,11" stroke="#dc6670" stroke-width="2.6"/></svg></div>
<div class="code" style="height:75px"></div>
<div class="t ct" style="left:3.5px;top:21.8px">MOV CH2 CH3</div>
<div class="lab" style="left:271.5px;top:19.0px;color:#ece3c8">ACC</div>
<div class="disp" style="left:263.75px;top:32.0px"><div class="din"><svg width="55.5" height="20" style="position:absolute;left:0;top:0"><use href="#dg"/></svg></div></div>
<div class="lab" style="left:271.5px;top:59.0px;color:#a9c2b6">CH?</div>
<div class="disp" style="left:263.75px;top:72.0px"><div class="din"><svg width="55.5" height="20" style="position:absolute;left:0;top:0"><use href="#dg"/></svg></div></div>
</div>
<div class="a" style="left:522.5px;top:610px;width:322px;height:4.5px;background:#34453d"></div>
<div class="a" style="left:522.5px;top:427px;width:2.5px;height:187.5px;background:#27332d"></div>
<div class="chip" style="left:525px;top:421px;height:189px">
<div class="a" style="left:0;top:0;width:1.5px;height:189px;background:#8cb1a3"></div>
<div class="a" style="left:0;top:189px;width:325px;height:0px;background:#6a9485;border-top:1px solid #86ab9d"></div>
<div class="title">AW0903 ($21)</div>
<div class="cl" style="left:303px;top:1px"><svg width="17" height="14" style="position:absolute;left:0;top:0"><path d="M4.5,3 L12.5,11 M12.5,3 L4.5,11" stroke="#dc6670" stroke-width="2.6"/></svg></div>
<div class="code" style="height:168px"></div>
<div class="a" style="left:1.5px;top:20px;width:260px;height:19.5px;background:#b5403f"></div><div class="a" style="left:88.5px;top:20px;width:1.3px;height:19.5px;background:#f2a9a5"></div>
<div class="t ct" style="left:3.5px;top:21.8px">JEZ CH2</div>
<div class="lab" style="left:271.5px;top:19.0px;color:#ece3c8">ACC</div>
<div class="disp" style="left:263.75px;top:32.0px"><div class="din"><svg width="55.5" height="20" style="position:absolute;left:0;top:0"><use href="#dg"/></svg></div></div>
<div class="lab" style="left:271.5px;top:61.5px;color:#a9c2b6">CH?</div>
<div class="disp" style="left:263.75px;top:74.5px"><div class="din"><svg width="55.5" height="20" style="position:absolute;left:0;top:0"><use href="#dg"/></svg></div></div>
<div class="lab" style="left:271.5px;top:104.0px;color:#a9c2b6">CH?</div>
<div class="disp" style="left:263.75px;top:117.0px"><div class="din"><svg width="55.5" height="20" style="position:absolute;left:0;top:0"><use href="#dg"/></svg></div></div>
<div class="lab" style="left:271.5px;top:146.5px;color:#a9c2b6">CH?</div>
<div class="disp" style="left:263.75px;top:159.5px"><div class="din"><svg width="55.5" height="20" style="position:absolute;left:0;top:0"><use href="#dg"/></svg></div></div>
</div>
<div class="a" style="left:527px;top:607.7px;width:323px;height:17.3px;background:#b84a46"></div>
<div class="t" style="left:527px;top:609.3px;width:323px;text-align:center;color:#3b1d1a;font-size:17.5px;letter-spacing:0.1px">&quot;JEZ&quot; requires 2 parameters</div>
<div class="a" style="left:863.5px;top:304px;width:322px;height:4.5px;background:#34453d"></div>
<div class="a" style="left:863.5px;top:112px;width:2.5px;height:196.5px;background:#27332d"></div>
<div class="chip" style="left:866px;top:106px;height:198px">
<div class="a" style="left:0;top:0;width:1.5px;height:198px;background:#8cb1a3"></div>
<div class="a" style="left:0;top:189px;width:325px;height:9px;background:#6a9485;border-top:1px solid #86ab9d"></div>
<div class="title">AW0903 ($21)</div>
<div class="cl" style="left:303px;top:1px"><svg width="17" height="14" style="position:absolute;left:0;top:0"><path d="M4.5,3 L12.5,11 M12.5,3 L4.5,11" stroke="#dc6670" stroke-width="2.6"/></svg></div>
<div class="code" style="height:168px"></div>
<div class="t ct" style="left:3.5px;top:21.8px">a: NOOP
b: MOV ACC INPUT
JEZ CH1 a
MOV OUTPUT ACC
JMP b</div>
<div class="lab" style="left:271.5px;top:19.0px;color:#ece3c8">ACC</div>
<div class="disp" style="left:263.75px;top:32.0px"><div class="din"><svg width="55.5" height="20" style="position:absolute;left:0;top:0"><use href="#dg"/></svg></div></div>
<div class="lab" style="left:271.5px;top:61.5px;color:#a9c2b6">CH?</div>
<div class="disp" style="left:263.75px;top:74.5px"><div class="din"><svg width="55.5" height="20" style="position:absolute;left:0;top:0"><use href="#dg"/></svg></div></div>
<div class="lab" style="left:271.5px;top:104.0px;color:#a9c2b6">CH?</div>
<div class="disp" style="left:263.75px;top:117.0px"><div class="din"><svg width="55.5" height="20" style="position:absolute;left:0;top:0"><use href="#dg"/></svg></div></div>
<div class="lab" style="left:271.5px;top:146.5px;color:#a9c2b6">CH?</div>
<div class="disp" style="left:263.75px;top:159.5px"><div class="din"><svg width="55.5" height="20" style="position:absolute;left:0;top:0"><use href="#dg"/></svg></div></div>
</div>
<div class="a" style="left:863.5px;top:508px;width:322px;height:4.5px;background:#34453d"></div>
<div class="a" style="left:863.5px;top:316px;width:2.5px;height:196.5px;background:#27332d"></div>
<div class="chip" style="left:866px;top:310px;height:198px">
<div class="a" style="left:0;top:0;width:1.5px;height:198px;background:#8cb1a3"></div>
<div class="a" style="left:0;top:189px;width:325px;height:9px;background:#6a9485;border-top:1px solid #86ab9d"></div>
<div class="title">AW0903 ($21)</div>
<div class="cl" style="left:303px;top:1px"><svg width="17" height="14" style="position:absolute;left:0;top:0"><path d="M4.5,3 L12.5,11 M12.5,3 L4.5,11" stroke="#dc6670" stroke-width="2.6"/></svg></div>
<div class="code" style="height:168px"></div>
<div class="t ct" style="left:3.5px;top:21.8px">B: MOV ACC INPUT
JEZ CH2 A
MOV OUTPUT ACC
JMP B
A: NOP
NOP</div>
<div class="lab" style="left:271.5px;top:19.0px;color:#ece3c8">ACC</div>
<div class="disp" style="left:263.75px;top:32.0px"><div class="din"><svg width="55.5" height="20" style="position:absolute;left:0;top:0"><use href="#dg"/></svg></div></div>
<div class="lab" style="left:271.5px;top:61.5px;color:#a9c2b6">CH?</div>
<div class="disp" style="left:263.75px;top:74.5px"><div class="din"><svg width="55.5" height="20" style="position:absolute;left:0;top:0"><use href="#dg"/></svg></div></div>
<div class="lab" style="left:271.5px;top:104.0px;color:#a9c2b6">CH?</div>
<div class="disp" style="left:263.75px;top:117.0px"><div class="din"><svg width="55.5" height="20" style="position:absolute;left:0;top:0"><use href="#dg"/></svg></div></div>
<div class="lab" style="left:271.5px;top:146.5px;color:#a9c2b6">CH?</div>
<div class="disp" style="left:263.75px;top:159.5px"><div class="din"><svg width="55.5" height="20" style="position:absolute;left:0;top:0"><use href="#dg"/></svg></div></div>
</div>
<div class="nub" style="left:174px;top:127.75px;border-radius:5px 0 0 6px"></div>
<div class="nub" style="left:174px;top:196.00px;border-radius:5px 0 0 6px"></div>
<div class="nub" style="left:174px;top:218.75px;border-radius:5px 0 0 6px"></div>
<div class="nub" style="left:174px;top:241.50px;border-radius:5px 0 0 6px"></div>
<div class="nub" style="left:174px;top:332.50px;border-radius:5px 0 0 6px"></div>
<div class="nub" style="left:174px;top:400.75px;border-radius:5px 0 0 6px"></div>
<div class="nub" style="left:515px;top:127.75px;border-radius:5px 0 0 6px"></div>
<div class="nub" style="left:515px;top:287.00px;border-radius:5px 0 0 6px"></div>
<div class="nub" style="left:515px;top:332.50px;border-radius:5px 0 0 6px"></div>
<div class="nub" style="left:515px;top:423.50px;border-radius:5px 0 0 6px"></div>
<div class="nub" style="left:515px;top:469.00px;border-radius:5px 0 0 6px"></div>
<div class="nub" style="left:856px;top:196.00px;border-radius:5px 0 0 6px"></div>
<div class="nub" style="left:856px;top:241.50px;border-radius:5px 0 0 6px"></div>
<div class="nub" style="left:856px;top:400.75px;border-radius:5px 0 0 6px"></div>
<div class="nub" style="left:856px;top:446.25px;border-radius:5px 0 0 6px"></div>
<div class="nub" style="left:509px;top:196.00px;border-radius:0 5px 6px 0"></div>
<div class="nub" style="left:509px;top:241.50px;border-radius:0 5px 6px 0"></div>
<div class="nub" style="left:509px;top:400.75px;border-radius:0 5px 6px 0"></div>
<div class="nub" style="left:509px;top:446.25px;border-radius:0 5px 6px 0"></div>
<div class="nub" style="left:850px;top:218.75px;border-radius:0 5px 6px 0"></div>
<div class="nub" style="left:850px;top:287.00px;border-radius:0 5px 6px 0"></div>
<div class="nub" style="left:850px;top:332.50px;border-radius:0 5px 6px 0"></div>
<div class="nub" style="left:850px;top:423.50px;border-radius:0 5px 6px 0"></div>
<div class="nub" style="left:850px;top:469.00px;border-radius:0 5px 6px 0"></div>
<div class="nub" style="left:1191px;top:196.00px;border-radius:0 5px 6px 0"></div>
<div class="nub" style="left:1191px;top:287.00px;border-radius:0 5px 6px 0"></div>
<div class="nub" style="left:1191px;top:400.75px;border-radius:0 5px 6px 0"></div>
<div class="nub" style="left:1191px;top:423.50px;border-radius:0 5px 6px 0"></div>
<div class="a" style="left:238px;top:537px;width:209px;height:45px;background:#3e3a2e"></div>
<div class="a" style="left:243px;top:532px;width:204px;height:45px;background:#a26b41"></div>
<div class="a" style="left:243px;top:532px;width:204px;height:42px;background:#b98152;border-top:1px solid #c48b5a"></div>
<div class="t" style="left:243px;top:546px;width:204px;text-align:center;color:#3a2a1e">+ Add Chip...</div>
<div class="a" style="left:920px;top:520px;width:209px;height:45px;background:#3e3a2e"></div>
<div class="a" style="left:925px;top:515px;width:204px;height:45px;background:#a26b41"></div>
<div class="a" style="left:925px;top:515px;width:204px;height:42px;background:#b98152;border-top:1px solid #c48b5a"></div>
<div class="t" style="left:925px;top:529px;width:204px;text-align:center;color:#3a2a1e">+ Add Chip...</div>
<div class="chtab" style="top:100px">CH1</div>
<div class="chd" style="top:113px"><i><svg width="55" height="20.5" style="position:absolute;left:0;top:0"><use href="#dg"/></svg></i></div>
<div class="chtab" style="top:148px">CH2</div>
<div class="chd" style="top:161px"><i><svg width="55" height="20.5" style="position:absolute;left:0;top:0"><use href="#dg"/></svg></i></div>
<div class="chtab" style="top:196px">CH3</div>
<div class="chd" style="top:209px"><i><svg width="55" height="20.5" style="position:absolute;left:0;top:0"><use href="#dg"/></svg></i></div>
<div class="chtab" style="top:244px">CH4</div>
<div class="chd" style="top:257px"><i><svg width="55" height="20.5" style="position:absolute;left:0;top:0"><use href="#dg"/></svg></i></div>
<div class="chtab" style="top:292px">CH5</div>
<div class="chd" style="top:305px"><i><svg width="55" height="20.5" style="position:absolute;left:0;top:0"><use href="#dg"/></svg></i></div>
<div class="chtab" style="top:340px">CH6</div>
<div class="chd" style="top:353px"><i><svg width="55" height="20.5" style="position:absolute;left:0;top:0"><use href="#dg"/></svg></i></div>
<div class="chtab" style="top:388px">CH7</div>
<div class="chd" style="top:401px"><i><svg width="55" height="20.5" style="position:absolute;left:0;top:0"><use href="#dg"/></svg></i></div>
<div class="chtab" style="top:436px">CH8</div>
<div class="chd" style="top:449px"><i><svg width="55" height="20.5" style="position:absolute;left:0;top:0"><use href="#dg"/></svg></i></div>
<div class="chtab" style="top:484px">CH9</div>
<div class="chd" style="top:497px"><i><svg width="55" height="20.5" style="position:absolute;left:0;top:0"><use href="#dg"/></svg></i></div>
<div class="chtab" style="top:532px">CH10</div>
<div class="chd" style="top:545px"><i><svg width="55" height="20.5" style="position:absolute;left:0;top:0"><use href="#dg"/></svg></i></div>
<div class="chtab" style="top:580px">CH11</div>
<div class="chd" style="top:593px"><i><svg width="55" height="20.5" style="position:absolute;left:0;top:0"><use href="#dg"/></svg></i></div>
<div class="chtab" style="top:628px">CH12</div>
<div class="chd" style="top:641px"><i><svg width="55" height="20.5" style="position:absolute;left:0;top:0"><use href="#dg"/></svg></i></div>
<div class="chtab" style="top:676px">CH13</div>
<div class="chd" style="top:689px"><i><svg width="55" height="20.5" style="position:absolute;left:0;top:0"><use href="#dg"/></svg></i></div>
</body></html>
